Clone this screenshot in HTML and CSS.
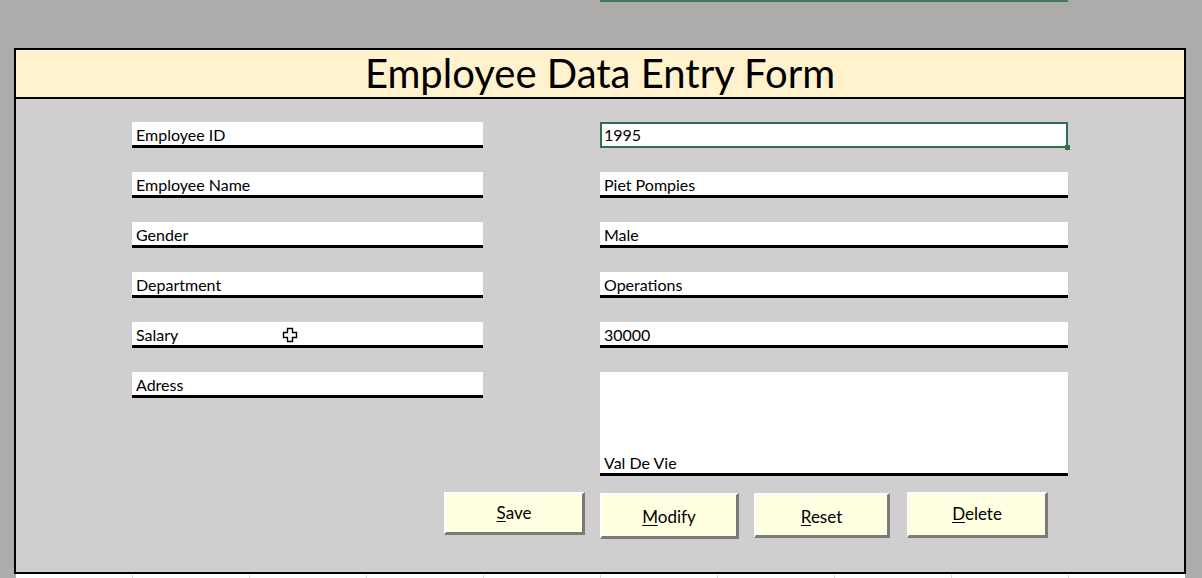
FILE: index.html
```html
<!DOCTYPE html>
<html>
<head>
<meta charset="utf-8">
<link rel="stylesheet" href="styles.css">
</head>
<body>
<div class="sheet">
  <div class="top-strip"><div class="sel-line"></div></div>
  <div class="form">
    <div class="title">Employee Data Entry Form</div>
    <div class="body">
      <div class="fields">
        <div class="cell label">Employee ID</div>
        <div class="cell value selected">1995<span class="handle"></span></div>
        <div class="cell label">Employee Name</div>
        <div class="cell value">Piet Pompies</div>
        <div class="cell label">Gender</div>
        <div class="cell value">Male</div>
        <div class="cell label">Department</div>
        <div class="cell value">Operations</div>
        <div class="cell label">Salary<svg class="cursor" width="16" height="16" viewBox="0 0 16 16"><path d="M5.5 1.5h5v4h4v5h-4v4h-5v-4h-4v-5h4z" fill="#fff" stroke="#000" stroke-width="1.4"/></svg></div>
        <div class="cell value">30000</div>
        <div class="cell label">Adress</div>
        <div class="cell value tall">Val De Vie</div>
      </div>
      <div class="buttons">
        <button class="btn btn-save"><u>S</u>ave</button>
        <button class="btn btn-modify"><u>M</u>odify</button>
        <button class="btn btn-reset"><u>R</u>eset</button>
        <button class="btn btn-delete"><u>D</u>elete</button>
      </div>
    </div>
  </div>
  <div class="grid-strip">
    <span></span><span></span><span></span><span></span><span></span><span></span><span></span><span></span><span></span>
  </div>
</div>
</body>
</html>
```
FILE: styles.css
```css
html, body {
  margin: 0;
  padding: 0;
  background: #aeabab;
  font-family: Lato, "Open Sans", sans-serif;
  overflow: hidden;
}
.sheet {
  width: 1202px;
  height: 578px;
}
.top-strip {
  height: 48px;
  position: relative;
}
.sel-line {
  position: absolute;
  left: 600px;
  top: 0;
  width: 468px;
  height: 2px;
  background: #3e7a58;
}
.form {
  margin-left: 14px;
  width: 1168px;
  border: 2px solid #000;
  background: #d0cece;
}
.title {
  height: 47px;
  background: #fff2cc;
  border-bottom: 2px solid #000;
  text-align: center;
  font-size: 40px;
  line-height: 47px;
  color: #000;
}
.body {
  height: 473px;
  padding-top: 23px;
  box-sizing: border-box;
}
.fields {
  display: grid;
  grid-template-columns: 351px 468px;
  column-gap: 117px;
  row-gap: 24px;
  margin-left: 116px;
  align-items: start;
}
.cell {
  position: relative;
  height: 26px;
  box-sizing: border-box;
  background: #fff;
  border-bottom: 3px solid #000;
  padding: 0 4px 1px;
  font-size: 16px;
  line-height: 18px;
  color: #000;
  display: flex;
  align-items: flex-end;
}
.cell.tall {
  height: 104px;
}
.cell.selected {
  border: 2px solid #2f6f4c;
  border-bottom-width: 2px;
  padding: 0 2px 2px;
}
.handle {
  position: absolute;
  right: -4px;
  bottom: -4px;
  width: 5px;
  height: 5px;
  background: #2f6f4c;
}
.cursor {
  position: absolute;
  left: 150px;
  top: 5px;
}
.buttons {
  display: flex;
  align-items: flex-start;
  margin-top: 16px;
  margin-left: 428px;
}
.btn {
  font-family: Lato, "Open Sans", sans-serif;
  font-size: 17px;
  color: #000;
  background: #ffffe1;
  border-style: solid;
  border-width: 2px 3px 3px 2px;
  border-color: #ffffff #7a7a7a #7a7a7a #ffffff;
  padding: 0 0 2px;
  margin: 0;
  cursor: default;
}
.btn u {
  text-underline-offset: 2px;
}
.btn-save {
  width: 141px;
  height: 43px;
}
.btn-modify {
  width: 139px;
  height: 46px;
  margin-left: 15px;
  margin-top: 1px;
  padding-top: 4px;
}
.btn-reset {
  width: 136px;
  height: 45px;
  margin-left: 15px;
  margin-top: 1px;
  padding-top: 4px;
}
.btn-delete {
  width: 141px;
  height: 46px;
  margin-left: 17px;
}
.grid-strip {
  margin-left: 16px;
  width: 1169px;
  height: 4px;
  background: #fff;
  position: relative;
}
.grid-strip span {
  position: absolute;
  top: 0;
  width: 1px;
  height: 4px;
  background: #d9d9d9;
}
.grid-strip span:nth-child(1) { left: 116px; }
.grid-strip span:nth-child(2) { left: 233px; }
.grid-strip span:nth-child(3) { left: 350px; }
.grid-strip span:nth-child(4) { left: 467px; }
.grid-strip span:nth-child(5) { left: 584px; }
.grid-strip span:nth-child(6) { left: 701px; }
.grid-strip span:nth-child(7) { left: 818px; }
.grid-strip span:nth-child(8) { left: 935px; }
.grid-strip span:nth-child(9) { left: 1052px; }
```
